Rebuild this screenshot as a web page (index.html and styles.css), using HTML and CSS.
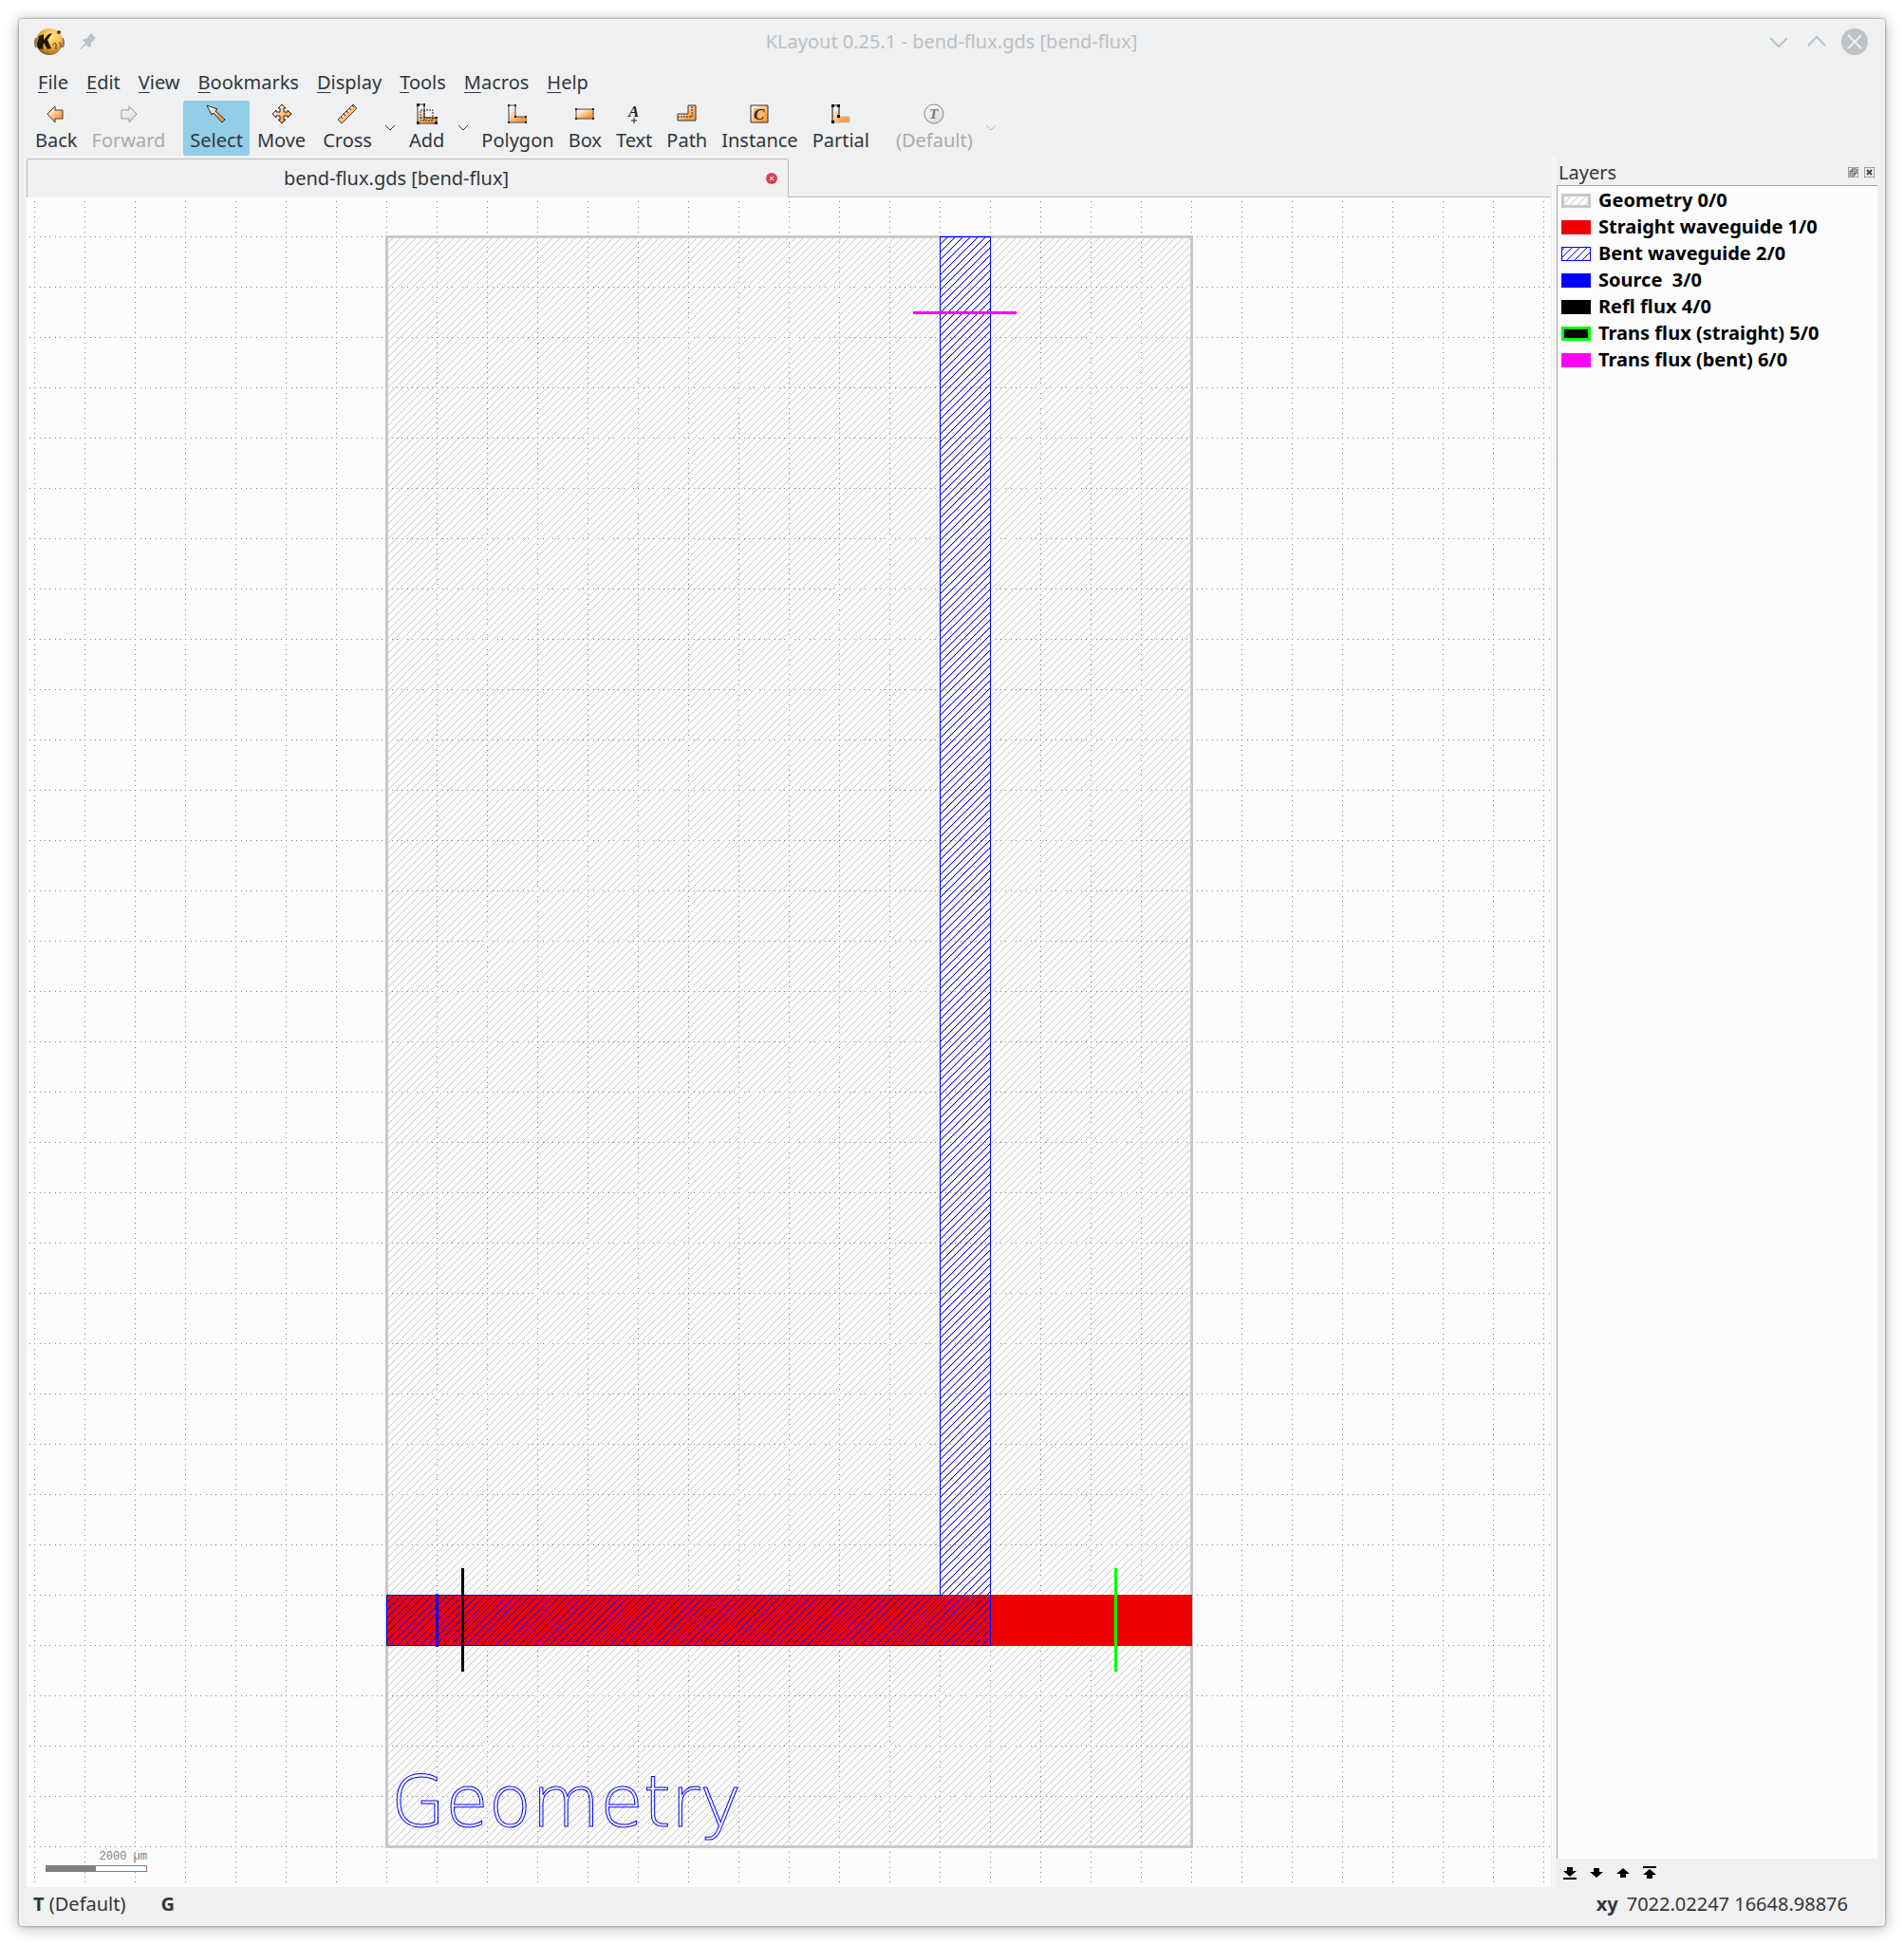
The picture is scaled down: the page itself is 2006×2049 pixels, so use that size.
FILE: index.html
```html
<!DOCTYPE html>
<html lang="en">
<head>
<meta charset="utf-8">
<title>KLayout 0.25.1 - bend-flux.gds [bend-flux]</title>
<link rel="stylesheet" href="styles.css">
</head>
<body>
<svg class="defs" width="0" height="0" aria-hidden="true">
  <defs>
    <linearGradient id="orange" x1="0" y1="0" x2="1" y2="1"><stop offset=".1" stop-color="#fff"/><stop offset=".75" stop-color="#ff9c3c"/></linearGradient>
    <linearGradient id="silver" x1="0" y1="0" x2="1" y2="1"><stop offset="0" stop-color="#fff"/><stop offset="1" stop-color="#d4d4d4"/></linearGradient>
    <radialGradient id="gold" cx=".6" cy=".3" r=".8"><stop offset="0" stop-color="#ffe68a"/><stop offset=".45" stop-color="#f4b84a"/><stop offset=".8" stop-color="#b9741c"/><stop offset="1" stop-color="#3d2508"/></radialGradient>
  </defs>
</svg>
<div class="window">
  <header class="titlebar">
    <div class="title-side">
      <svg class="app-icon" width="32" height="30" viewBox="0 0 32 30" aria-hidden="true">
        <path d="M2 11Q0 16 2 21M30 11Q32 16 30 21" fill="none" stroke="#77756c" stroke-width="2"/>
        <circle cx="16" cy="15" r="14" fill="url(#gold)"/>
        <path d="M5 9l5-2v6l5-6 4-1-5 7 4 9-4 1-4-7-1 7-5-1-1-4z" fill="#231708"/>
        <path d="M20 19q0-4 3-2v6M26 16q3 0 2 5" fill="none" stroke="#4d3312" stroke-width="1"/>
        <circle cx="26" cy="5" r="2" fill="#4b3a22"/>
      </svg>
      <button class="bare" aria-label="Pin window"><svg width="20" height="20" viewBox="0 0 20 20"><path d="M1 18l6-7-3-3 2-1 2 0 5-6 5 5-5 5 0 3-2 2-3-3-6 5z" fill="#bdc3c7"/></svg></button>
    </div>
    <h1 class="title">KLayout 0.25.1 - bend-flux.gds [bend-flux]</h1>
    <div class="title-side title-end">
      <button class="bare" aria-label="Minimize"><svg width="30" height="30" viewBox="0 0 30 30"><path d="M6 11l9 9 9-9" class="wm"/></svg></button>
      <button class="bare" aria-label="Maximize"><svg width="30" height="30" viewBox="0 0 30 30"><path d="M6 19l9-9 9 9" class="wm"/></svg></button>
      <button class="bare" aria-label="Close"><svg width="30" height="30" viewBox="0 0 30 30"><circle cx="15" cy="15" r="14" fill="#bdc3c7"/><path d="M8 8l14 14M22 8L8 22" stroke="#eff0f1" stroke-width="2"/></svg></button>
    </div>
  </header>

  <nav class="menubar" aria-label="Main menu">
    <button><u>F</u>ile</button><button><u>E</u>dit</button><button><u>V</u>iew</button><button><u>B</u>ookmarks</button><button><u>D</u>isplay</button><button><u>T</u>ools</button><button><u>M</u>acros</button><button><u>H</u>elp</button>
  </nav>

  <div class="toolbar" role="toolbar" aria-label="Tools">
    <button class="tool"><svg viewBox="0 0 22 22"><path d="M2 11l8-8v4h8v9h-8v4z" fill="url(#orange)" stroke="#4a3a2c"/></svg>Back</button>
    <button class="tool" disabled><svg viewBox="0 0 22 22"><path d="M20 11l-8-8v4H4v9h8v4z" fill="url(#silver)" stroke="#999"/></svg>Forward</button>
    <button class="tool active spaced" aria-pressed="true"><svg viewBox="0 0 22 22"><path d="M1 2l11 4-2 2 10 9-3 3-9-10-2 2z" fill="url(#orange)" stroke="#222"/></svg>Select</button>
    <button class="tool"><svg viewBox="0 0 22 22"><path d="M11 1l4 4h-2v4h4V7l4 4-4 4v-2h-4v4h2l-4 4-4-4h2v-4H5v2l-4-4 4-4v2h4V5H7z" fill="url(#orange)" stroke="#222"/></svg>Move</button>
    <button class="tool wide"><svg viewBox="0 0 22 22"><path d="M1 17L17 1l4 4L5 21z" fill="url(#orange)" stroke="#444"/><path d="M4 14l2 2M7 11l2 2M10 8l2 2M13 5l2 2M16 2l2 2" stroke="#333"/></svg>Cross</button>
    <button class="drop" aria-label="Ruler templates"><svg viewBox="0 0 12 8"><path d="M1 1l5 5 5-5"/></svg></button>
    <button class="tool"><svg viewBox="0 0 22 22"><path d="M1 1h7v14h13v6H1z" fill="url(#orange)" stroke="#333"/><path d="M4 7h13v11H4zM8 7v11M4 15h13" fill="none" stroke="#222" stroke-dasharray="2 1"/><path d="M0 0h3v3H0zM7 0h2v3H7zM0 19h3v3H0zM19 19h3v3h-3zM19 14h3v2h-3z" fill="#222"/></svg>Add</button>
    <button class="drop" aria-label="Add modes"><svg viewBox="0 0 12 8"><path d="M1 1l5 5 5-5"/></svg></button>
    <button class="tool"><svg viewBox="0 0 22 22"><path d="M2 2h7v12h11v6H2z" fill="url(#orange)" stroke="#444"/><path d="M1 1h2v2H1zM8 1h2v2H8zM1 19h2v2H1zM19 19h2v2h-2zM19 13h2v2h-2zM8 13h2v2H8z" fill="#222"/></svg>Polygon</button>
    <button class="tool"><svg viewBox="0 0 22 22"><path d="M2 6h18v10H2z" fill="url(#orange)" stroke="#444"/><path d="M1 5h2v2H1zM19 5h2v2h-2zM1 15h2v2H1zM19 15h2v2h-2z" fill="#222"/></svg>Box</button>
    <button class="tool"><svg viewBox="0 0 22 22"><text x="5" y="14" class="glyph letter-a">A</text><path d="M11 15v6M8 18h6" stroke="#222"/></svg>Text</button>
    <button class="tool"><svg viewBox="0 0 22 22"><path d="M1 11h11V2h8v16H1z" fill="url(#orange)" stroke="#333"/><path d="M1 14h15V2" fill="none" stroke="#222" stroke-dasharray="2 1"/></svg>Path</button>
    <button class="tool"><svg viewBox="0 0 22 22"><path d="M2 2h18v18H2z" fill="url(#orange)" stroke="#333"/><path d="M5 5h12v12H5z" fill="#ffb469"/><text x="5" y="17" class="glyph letter-c">C</text></svg>Instance</button>
    <button class="tool"><svg viewBox="0 0 22 22"><path d="M2 2h7v12h11v6H2z" fill="url(#orange)" stroke="#bbb"/><path d="M9 2H2v18M9 2v12" fill="none" stroke="#222"/><path d="M1 1h3v3H1zM7 1h3v3H7zM1 18h3v3H1zM7 12h3v3H7z" fill="#000"/></svg>Partial</button>
    <button class="tool spaced-more" disabled><svg viewBox="0 0 22 22"><circle cx="11" cy="11" r="10" fill="url(#silver)" stroke="#888"/><text x="6" y="16" class="glyph letter-t">T</text></svg>(Default)</button>
    <button class="drop faded" disabled aria-label="Technologies"><svg viewBox="0 0 12 8"><path d="M1 1l5 5 5-5"/></svg></button>
  </div>

  <main class="workspace">
    <section class="view">
      <div class="tabs">
        <div class="tab"><span class="tab-title">bend-flux.gds [bend-flux]</span><button class="bare" aria-label="Close tab"><svg width="12" height="12" viewBox="0 0 12 12"><circle cx="6" cy="6" r="6" fill="#da4453"/><path d="M4 4l4 4M8 4L4 8" stroke="#fff"/></svg></button></div>
      </div>
      <div class="canvas">
        <svg class="drawing" role="img" aria-label="Layout of bend-flux">
          <defs>
            <pattern id="grid" x="8" y="41" width="53" height="53" patternUnits="userSpaceOnUse">
              <path class="dots" d="M0 0h1M6 0h1M11 0h1M16 0h1M22 0h1M27 0h1M32 0h1M38 0h1M43 0h1M48 0h1M0 6h1M0 11h1M0 16h1M0 22h1M0 27h1M0 32h1M0 37h1M0 43h1M0 48h1" transform="translate(0 .5)"/>
            </pattern>
            <pattern id="hatch-gray" width="8" height="8" patternUnits="userSpaceOnUse">
              <path fill="#c8c8c8" d="M0 4h1v1h-1zM1 3h1v1h-1zM2 2h1v1h-1zM3 1h1v1h-1zM4 0h1v1h-1zM5 7h1v1h-1zM6 6h1v1h-1zM7 5h1v1h-1z"/>
            </pattern>
            <pattern id="hatch-blue" width="8" height="8" patternUnits="userSpaceOnUse">
              <path fill="#00f" d="M0 3h1v1h-1zM1 2h1v1h-1zM2 1h1v1h-1zM3 0h1v1h-1zM4 7h1v1h-1zM5 6h1v1h-1zM6 5h1v1h-1zM7 4h1v1h-1z"/>
            </pattern>
          </defs>
          <rect x="3" y="3" width="100%" height="100%" fill="url(#grid)"/>
          <rect x="379" y="41" width="849" height="1697" fill="url(#hatch-gray)"/>
          <path fill="#c8c8c8" fill-rule="evenodd" d="M378 40h851v1699h-851zM381 43v1693h845v-1693z"/>
          <rect x="379" y="1472" width="849" height="54" fill="#e00"/>
          <path fill="url(#hatch-blue)" d="M962 41h54v1485h-637v-54h583z"/>
          <path fill="#00f" fill-rule="evenodd" d="M962 41h54v1485h-637v-54h583zM963 42v1431h-583v52h635v-1483z"/>
          <rect x="431" y="1471" width="3" height="56" fill="#00f"/>
          <rect x="458" y="1444" width="3" height="109"/>
          <rect x="1146" y="1444" width="3" height="109" fill="#0f0"/>
          <rect x="934" y="120" width="109" height="3" fill="#f0f"/>
          <text x="384" y="1716" class="cell-label">Geometry</text>
        </svg>
        <div class="scale"><span>2000 µm</span><div class="scale-bar"></div></div>
      </div>
    </section>
    <div class="splitter"></div>
    <aside class="dock">
      <div class="dock-head"><h2>Layers</h2>
        <button class="bare" aria-label="Float"><svg width="11" height="11" viewBox="0 0 11 11"><rect x="0" y="0" width="11" height="11" rx="1" class="tiny"/><path d="M4 2h5v5H4zM2 4h5v5H2z" class="tiny"/></svg></button>
        <button class="bare" aria-label="Close panel"><svg width="11" height="11" viewBox="0 0 11 11"><rect x="0" y="0" width="11" height="11" rx="1" class="tiny"/><path d="M3 3l5 5M8 3L3 8" stroke="#444" stroke-width="2"/></svg></button>
      </div>
      <ul class="layers">
        <li><svg class="swatch"><rect width="31" height="15" fill="url(#hatch-gray)"/><path fill="#c8c8c8" fill-rule="evenodd" d="M0 0h31v15h-31zM3 3v9h25v-9z"/></svg>Geometry 0/0</li>
        <li><svg class="swatch"><rect width="31" height="15" fill="#e00"/></svg>Straight waveguide 1/0</li>
        <li><svg class="swatch"><rect width="31" height="15" fill="url(#hatch-blue)"/><path fill="#00f" fill-rule="evenodd" d="M0 0h31v15h-31zM1 1v13h29v-13z"/></svg>Bent waveguide 2/0</li>
        <li><svg class="swatch"><rect width="31" height="15" fill="#00f"/></svg>Source&nbsp; 3/0</li>
        <li><svg class="swatch"><rect width="31" height="15"/></svg>Refl flux 4/0</li>
        <li><svg class="swatch"><rect width="31" height="15" fill="#0f0"/><rect x="3" y="3" width="25" height="9"/></svg>Trans flux (straight) 5/0</li>
        <li><svg class="swatch"><rect width="31" height="15" fill="#f0f"/></svg>Trans flux (bent) 6/0</li>
      </ul>
      <div class="order">
        <button class="bare" aria-label="Move to bottom"><svg width="14" height="14" viewBox="0 0 14 14"><path d="M4 1h6v4h4l-7 6-7-6h4zM0 12h14v2H0z"/></svg></button>
        <button class="bare" aria-label="Move down"><svg width="14" height="14" viewBox="0 0 14 14"><path d="M4 2h6v4h4l-7 6-7-6h4z"/></svg></button>
        <button class="bare" aria-label="Move up"><svg width="14" height="14" viewBox="0 0 14 14"><path d="M4 12h6V8h4L7 2 0 8h4z"/></svg></button>
        <button class="bare" aria-label="Move to top"><svg width="14" height="14" viewBox="0 0 14 14"><path d="M4 13h6V9h4L7 3 0 9h4zM0 0h14v2H0z"/></svg></button>
      </div>
    </aside>
  </main>

  <footer class="status">
    <span><b>T</b> (Default)</span><b>G</b>
    <span class="coords"><b>xy</b> <span>7022.02247 16648.98876</span></span>
  </footer>
</div>
</body>
</html>
```
FILE: styles.css
```css
* { box-sizing: border-box; }
body {
  margin: 0;
  padding: 20px;
  min-height: 100vh;
  display: flex;
  background: #fff;
  color: #31363b;
  font: 20px/28px "Noto Sans", sans-serif;
}
svg { display: block; }
.defs { position: absolute; }
button { font: inherit; color: inherit; background: none; border: 0; padding: 0; }
h1, h2 { margin: 0; font: inherit; }

.window {
  flex: 1;
  min-width: 0;
  display: flex;
  flex-direction: column;
  background: #eff0f1;
  border-radius: 3px;
  box-shadow: 0 2px 16px rgba(0, 0, 0, .3), 0 0 3px rgba(0, 0, 0, .5);
}

.titlebar { display: flex; align-items: center; height: 48px; padding: 0 17px 0 16px; }
.title-side { flex: 1; display: flex; align-items: center; gap: 15px; }
.title-end { justify-content: flex-end; gap: 10px; }
.title { color: #bdc0c3; }
.wm { fill: none; stroke: #bdc3c7; stroke-width: 2; }

.menubar { display: flex; gap: 1px; height: 38px; padding: 0 11px; }
.menubar button { padding: 0 9px; }
.menubar u { text-decoration-thickness: 1px; text-underline-offset: 3px; }

.toolbar { display: flex; gap: 1px; height: 58px; padding: 0 10px; }
.tool {
  display: flex;
  flex-direction: column;
  align-items: center;
  justify-content: flex-start;
  padding: 3px 7px 0;
  line-height: 34px;
  border-radius: 3px;
}
.tool svg { flex: none; width: 22px; height: 22px; }
.tool.active { background: #93cee9; }
.tool.spaced { margin-left: 11px; }
.tool.spaced-more { margin-left: 13px; }
.tool.wide { margin-left: 3px; }
.tool:disabled { color: #a9abad; }
.drop { width: 23px; display: flex; align-items: center; justify-content: center; }
.drop svg { width: 12px; height: 8px; fill: none; stroke: #31363b; }
.drop.faded svg { stroke: #b4b6b8; }
.glyph { font: italic bold 17px "Liberation Serif", serif; fill: #222; }
.letter-t { fill: #777; font-size: 15px; }

.workspace {
  flex: 1;
  display: grid;
  grid-template-columns: minmax(0, 1fr) 6px 338px;
  padding: 0 8px;
}
.view { display: flex; flex-direction: column; padding-top: 3px; }
.tabs { display: flex; height: 41px; border-bottom: 1px solid #b4b6b8; }
.tab {
  width: 50%;
  display: flex;
  align-items: center;
  gap: 12px;
  height: 41px;
  padding: 0 11px;
  background: #eff0f1;
  border: 1px solid #b9bbbd;
  border-bottom: 0;
  border-radius: 3px 3px 0 0;
}
.tab-title { flex: 1; text-align: center; }
.canvas { flex: 1; position: relative; min-height: 1780px; background: #fcfcfc; }
.drawing { position: absolute; inset: 0; width: 100%; height: 100%; shape-rendering: crispEdges; }
.dots { stroke: #808080; stroke-width: 1; }
.cell-label {
  font: 200 74px "DejaVu Sans", sans-serif;
  fill: none;
  stroke: #00f;
  stroke-width: 1;
}
.scale {
  position: absolute;
  left: 20px;
  bottom: 16px;
  width: 107px;
  color: #808080;
  font: 12px/18px "Liberation Mono", monospace;
  text-align: right;
}
.scale-bar {
  height: 7px;
  border: 1px solid #808080;
  background: linear-gradient(90deg, #808080 50%, #fff 50%);
}

.splitter {
  margin-left: 1px;
  background: repeating-conic-gradient(#fcfcfc 0 25%, #eff0f1 0 50%) 0 0 / 4px 4px;
}

.dock { display: flex; flex-direction: column; }
.dock-head { display: flex; align-items: center; gap: 6px; height: 31px; padding: 4px 3px 0 2px; }
.dock-head h2 { flex: 1; }
.tiny { fill: none; stroke: #555; }
.layers {
  flex: 1;
  margin: 0;
  padding: 1px 0 0;
  list-style: none;
  background: #fcfcfc;
  border: solid #9fa3a6;
  border-width: 1px 0 0 1px;
  color: #000;
  font-weight: bold;
}
.layers li { display: flex; align-items: center; gap: 8px; height: 28px; padding-left: 4px; }
.swatch { width: 31px; height: 15px; shape-rendering: crispEdges; }
.order { display: flex; align-items: center; gap: 14px; height: 30px; padding-left: 7px; }

.status { display: flex; align-items: center; gap: 37px; height: 41px; padding: 0 39px 6px 15px; }
.coords { margin-left: auto; display: flex; gap: 9px; }
```
